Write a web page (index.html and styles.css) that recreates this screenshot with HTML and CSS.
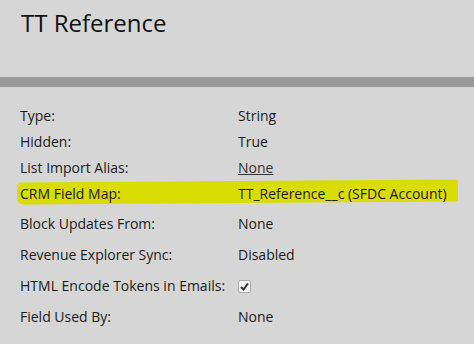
FILE: index.html
```html
<!DOCTYPE html>
<html lang="en">
<head>
    <meta charset="UTF-8">
    <title>TT Reference</title>
    <link rel="stylesheet" href="styles.css">
</head>
<body>
    <div class="header">
        <h1 class="title">TT Reference</h1>
    </div>
    <div class="divider"></div>

    <div class="props">
        <div class="row">
            <div class="label">Type:</div>
            <div class="value">String</div>
        </div>
        <div class="row">
            <div class="label">Hidden:</div>
            <div class="value">True</div>
        </div>
        <div class="row">
            <div class="label">List Import Alias:</div>
            <div class="value"><a class="link" href="#">None</a></div>
        </div>
        <div class="row marked">
            <span class="marker"></span>
            <div class="label">CRM Field Map:</div>
            <div class="value">TT_Reference__c (SFDC Account)</div>
        </div>
        <div class="row tall">
            <div class="label">Block Updates From:</div>
            <div class="value">None</div>
        </div>
        <div class="row tall">
            <div class="label">Revenue Explorer Sync:</div>
            <div class="value">Disabled</div>
        </div>
        <div class="row tall">
            <div class="label">HTML Encode Tokens in Emails:</div>
            <div class="value">
                <span class="check">
                    <svg width="9" height="9" viewBox="0 0 9 9"><path d="M1 5 L3.5 7.5 L8 1.5" fill="none" stroke="#333" stroke-width="2"/></svg>
                </span>
            </div>
        </div>
        <div class="row tall">
            <div class="label">Field Used By:</div>
            <div class="value">None</div>
        </div>
    </div>
</body>
</html>
```

FILE: styles.css
```css
body, html {
    margin: 0;
    padding: 0;
    background: #d6d6d6;
    color: #1a1a1a;
    font-family: "Open Sans", Arial, sans-serif;
}

.header {
    height: 77px;
    padding-left: 21px;
}

.title {
    margin: 0;
    padding-top: 6px;
    font-size: 24px;
    font-weight: normal;
    color: #111;
}

.divider {
    height: 10px;
    background-color: #999;
}

.props {
    padding-top: 15px;
}

.row {
    display: flex;
    align-items: center;
    height: 26px;
    font-size: 14px;
    position: relative;
}

.row.tall {
    height: 31px;
}

.label {
    width: 218px;
    padding-left: 20px;
}

.value {
    flex: 1;
}

.link {
    color: #333;
    text-decoration: underline;
}

/* highlighter stroke over the CRM row */
.marked {
    margin-bottom: 2px;
}

.marked .label, .marked .value {
    position: relative;
}

.marker {
    position: absolute;
    left: 17px;
    width: 441px;
    top: 1px;
    height: 22px;
    background: #d9dc00;
    border-radius: 4px 2px 3px 6px;
    transform: skewY(-0.4deg);
}

.check {
    display: inline-flex;
    align-items: center;
    justify-content: center;
    width: 11px;
    height: 11px;
    border: 1px solid #aaa;
    border-radius: 2px;
    background: #f4f4f4;
    margin-top: 3px;
}
```
